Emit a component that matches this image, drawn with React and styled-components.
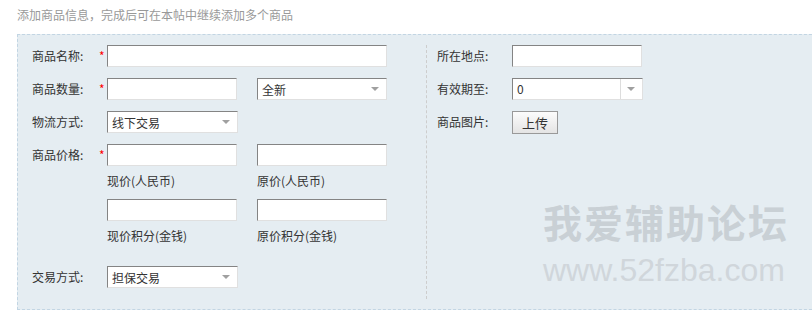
import React from "react";
import styled, { createGlobalStyle } from "styled-components";

const GlobalStyle = createGlobalStyle`
  html, body {
    margin: 0;
    padding: 0;
    background: #ffffff;
  }
  body {
    font-family: "Noto Sans CJK SC", "Liberation Sans", sans-serif;
    font-size: 12px;
    color: #333333;
    overflow: hidden;
  }
  * {
    box-sizing: border-box;
  }
`;

const App = () => {
  return (
    <Page>
      <GlobalStyle />
      <Hint>添加商品信息，完成后可在本帖中继续添加多个商品</Hint>
      <Panel>
        <LeftCol>
          <Row>
            <Label>商品名称:</Label>
            <Star>*</Star>
            <TextInput width={280} />
          </Row>
          <Row>
            <Label>商品数量:</Label>
            <Star>*</Star>
            <TextInput width={130} />
            <Select width={130} gap={20}>
              全新
              <Arrow />
            </Select>
          </Row>
          <Row>
            <Label>物流方式:</Label>
            <Star />
            <Select width={131}>
              线下交易
              <Arrow />
            </Select>
          </Row>
          <PriceRow>
            <Label>商品价格:</Label>
            <Star>*</Star>
            <PriceGrid>
              <TextInput width={130} />
              <TextInput width={130} />
              <Caption>现价(人民币)</Caption>
              <Caption>原价(人民币)</Caption>
              <TextInput width={130} />
              <TextInput width={130} />
              <Caption>现价积分(金钱)</Caption>
              <Caption>原价积分(金钱)</Caption>
            </PriceGrid>
          </PriceRow>
          <Row>
            <Label>交易方式:</Label>
            <Star />
            <Select width={131}>
              担保交易
              <Arrow />
            </Select>
          </Row>
        </LeftCol>
        <RightCol>
          <Row>
            <Label wide>所在地点:</Label>
            <TextInput width={130} />
          </Row>
          <Row>
            <Label wide>有效期至:</Label>
            <Combo>
              <ComboText>0</ComboText>
              <ComboButton>
                <Arrow />
              </ComboButton>
            </Combo>
          </Row>
          <Row>
            <Label wide>商品图片:</Label>
            <Button>上传</Button>
          </Row>
        </RightCol>
      </Panel>
      <Watermark>
        <MarkTitle>我爱辅助论坛</MarkTitle>
        <MarkUrl>www.52fzba.com</MarkUrl>
      </Watermark>
    </Page>
  );
};

const Page = styled.div`
  position: relative;
  width: 812px;
  height: 311px;
  overflow: hidden;
  padding: 8px 0 0 17px;
`;

const Hint = styled.div`
  color: #999999;
  line-height: 14px;
  height: 14px;
`;

const Panel = styled.div`
  display: flex;
  margin-top: 12px;
  width: 820px;
  height: 276px;
  padding: 10px 0;
  background: #e5edf2;
  border: 1px dashed #c2d5e3;
  border-right: none;
`;

const LeftCol = styled.div`
  width: 409px;
  padding-left: 14px;
  border-right: 1px dashed #cdcdcd;
`;

const RightCol = styled.div`
  flex: 1;
  padding-left: 10px;
`;

const Row = styled.div`
  display: flex;
  align-items: center;
  height: 22px;
  margin-bottom: 11px;
`;

const PriceRow = styled.div`
  display: flex;
  align-items: flex-start;
  margin-bottom: 12px;
`;

const Label = styled.div`
  width: ${(props) => (props.wide ? "75px" : "67px")};
  line-height: 22px;
  color: #333333;
  flex-shrink: 0;
`;

const Star = styled.span`
  width: 8px;
  line-height: 22px;
  color: #ff0000;
  font-size: 12px;
  align-self: flex-start;
  flex-shrink: 0;
`;

const TextInput = styled.div`
  width: ${(props) => props.width}px;
  height: 22px;
  background: #ffffff;
  border: 1px solid;
  border-color: #848484 #e0e0e0 #e0e0e0 #848484;
  flex-shrink: 0;
`;

const Select = styled.div`
  position: relative;
  display: flex;
  align-items: center;
  width: ${(props) => props.width}px;
  height: 22px;
  margin-left: ${(props) => props.gap || 0}px;
  padding-left: 4px;
  background: #ffffff;
  border: 1px solid;
  border-color: #848484 #e0e0e0 #e0e0e0 #848484;
  color: #333333;
  flex-shrink: 0;
`;

const Arrow = styled.span`
  position: absolute;
  right: 7px;
  top: 8px;
  width: 0;
  height: 0;
  border-left: 4px solid transparent;
  border-right: 4px solid transparent;
  border-top: 4px solid #a0a0a0;
`;

const PriceGrid = styled.div`
  display: grid;
  grid-template-columns: 130px 130px;
  grid-auto-rows: 22px 33px;
  column-gap: 20px;
`;

const Caption = styled.div`
  padding-top: 6px;
  line-height: 18px;
  color: #333333;
`;

const Combo = styled.div`
  display: flex;
  width: 131px;
  height: 22px;
  background: #ffffff;
  border: 1px solid;
  border-color: #848484 #e0e0e0 #e0e0e0 #848484;
`;

const ComboText = styled.div`
  flex: 1;
  padding-left: 4px;
  line-height: 20px;
  color: #333333;
`;

const ComboButton = styled.div`
  position: relative;
  width: 22px;
  border-left: 1px solid #dddddd;
`;

const Button = styled.div`
  width: 46px;
  height: 23px;
  margin-top: 1px;
  display: flex;
  align-items: center;
  justify-content: center;
  border: 1px solid #999999;
  background: linear-gradient(#fcfcfc, #e4e4e4);
  color: #333333;
  font-size: 13px;
`;

const Watermark = styled.div`
  position: absolute;
  left: 543px;
  top: 199px;
  display: flex;
  flex-direction: column;
  pointer-events: none;
`;

const MarkTitle = styled.div`
  font-size: 39px;
  font-weight: bold;
  line-height: 44px;
  letter-spacing: 2px;
  color: #c9d0d5;
`;

const MarkUrl = styled.div`
  margin-top: 10px;
  font-family: "Liberation Sans", sans-serif;
  font-size: 32px;
  line-height: 34px;
  color: #d0d6db;
`;

export default App;
